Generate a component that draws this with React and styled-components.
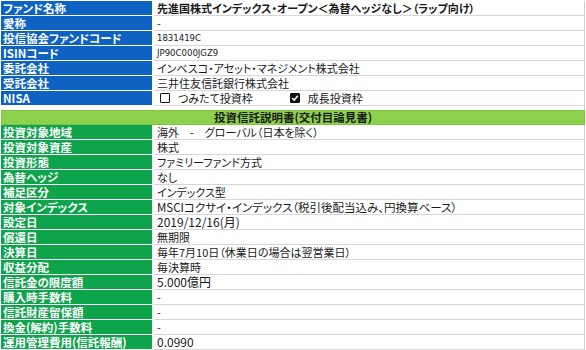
import { Fragment } from "react"
import styled, { createGlobalStyle } from "styled-components"

const GlobalStyle = createGlobalStyle`
  body {
    margin: 0;
    background: #fff;
    font-family: "Noto Sans CJK JP", "Noto Sans", sans-serif;
    color: #1a1a1a;
  }
`

const Page = styled.div`
  width: 586px;
  height: 350px;
  overflow: hidden;
  padding: 1px 1px 0 1px;
  box-sizing: border-box;
`

const Grid = styled.div`
  display: grid;
  grid-template-columns: 151px 1fr;
  column-gap: 2px;
  border-right: 1px solid #cfcfcf;
`

const Label = styled.div`
  height: 14px;
  line-height: 14px;
  border-bottom: 1px solid #fff;
  background: ${({ $green }) => ($green ? "#0ea44c" : "#0e63c2")};
  color: #fff;
  font-size: 11.5px;
  font-weight: 700;
  padding-left: 2px;
  white-space: nowrap;
  overflow: hidden;
  font-feature-settings: "palt";
`

const Value = styled.div`
  height: 14px;
  border-bottom: 1px solid #d6d6d6;
  padding-left: 3px;
  font-size: ${({ $size }) => $size || 11}px;
  line-height: 14px;
  font-weight: ${({ $bold }) => ($bold ? 700 : 400)};
  white-space: nowrap;
  font-feature-settings: "palt";
  display: flex;
  align-items: center;
`

const Code = styled.span`
  font-family: "DejaVu Sans", sans-serif;
  font-stretch: condensed;
  font-size: 9.5px;
`

const Spacer = styled.div`
  height: 4px;
  border-right: 1px solid #cfcfcf;
`

const SectionHead = styled.div`
  height: 13px;
  line-height: 13px;
  background: #8ed14f;
  border: 1px solid #7fc33f;
  text-align: center;
  font-size: 11.5px;
  font-weight: 700;
  color: #1a1a1a;
  font-feature-settings: "palt";
`

const CheckGroup = styled.span`
  display: inline-flex;
  align-items: center;
  gap: 8px;
  margin-left: 3px;
  margin-right: ${({ $gap }) => $gap || 0}px;
`

const Box = styled.span`
  width: 8px;
  height: 8px;
  border: 1.5px solid #111;
  border-radius: 1px;
  background: ${({ $checked }) => ($checked ? "#111" : "#fff")};
  display: inline-flex;
  align-items: center;
  justify-content: center;
`

function Check({ checked, label, gap }) {
  return (
    <CheckGroup $gap={gap}>
      <Box $checked={checked}>
        {checked && (
          <svg width="8" height="8" viewBox="0 0 8 8">
            <path d="M1.2 4.2 L3.2 6.1 L6.9 1.8" stroke="#fff" strokeWidth="1.5" fill="none" />
          </svg>
        )}
      </Box>
      {label}
    </CheckGroup>
  )
}

const basic = [
  ["ファンド名称", "先進国株式インデックス・オープン＜為替ヘッジなし＞（ラップ向け）", { bold: true }],
  ["愛称", "-"],
  ["投信協会ファンドコード", <Code>1831419C</Code>],
  ["ISINコード", <Code>JP90C000JGZ9</Code>],
  ["委託会社", "インベスコ・アセット・マネジメント株式会社"],
  ["受託会社", "三井住友信託銀行株式会社"],
  [
    "NISA",
    <>
      <Check label="つみたて投資枠" gap={34} />
      <Check checked label="成長投資枠" />
    </>,
  ],
]

const prospectus = [
  ["投資対象地域", "海外　-　グローバル（日本を除く）"],
  ["投資対象資産", "株式"],
  ["投資形態", "ファミリーファンド方式"],
  ["為替ヘッジ", "なし"],
  ["補足区分", "インデックス型"],
  ["対象インデックス", "MSCIコクサイ・インデックス（税引後配当込み、円換算ベース）", { size: 11.5 }],
  ["設定日", "2019/12/16(月)", { size: 12 }],
  ["償還日", "無期限"],
  ["決算日", "毎年7月10日（休業日の場合は翌営業日）"],
  ["収益分配", "毎決算時"],
  ["信託金の限度額", "5.000億円", { size: 12 }],
  ["購入時手数料", "-"],
  ["信託財産留保額", "-"],
  ["換金(解約)手数料", "-"],
  ["運用管理費用(信託報酬)", "0.0990", { size: 12 }],
]

function Rows({ rows, green }) {
  return (
    <Grid>
      {rows.map(([label, value, opt = {}]) => (
        <Fragment key={label}>
          <Label $green={green}>{label}</Label>
          <Value $bold={opt.bold} $size={opt.size}>{value}</Value>
        </Fragment>
      ))}
    </Grid>
  )
}

export default function App() {
  return (
    <Page>
      <GlobalStyle />
      <Rows rows={basic} />
      <Spacer />
      <SectionHead>投資信託説明書(交付目論見書)</SectionHead>
      <Rows rows={prospectus} green />
    </Page>
  )
}
